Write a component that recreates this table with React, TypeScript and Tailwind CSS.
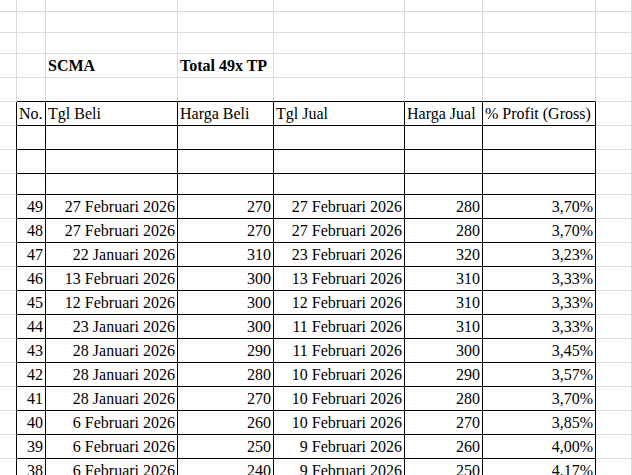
import React from 'react';

// column widths include the 1px right border of each cell
const colW = ['w-[17px]', 'w-[29px]', 'w-[132px]', 'w-[96px]', 'w-[131px]', 'w-[78px]', 'w-[113px]', 'flex-1'];

type Cell = { text?: string; align?: 'left' | 'right'; bold?: boolean };
type Row = { h: string; cells: Cell[]; table: boolean };

const TABLE_FIRST = 1;
const TABLE_LAST = 6;

const trades: [string, string, string, string, string, string][] = [
  ['49', '27 Februari 2026', '270', '27 Februari 2026', '280', '3,70%'],
  ['48', '27 Februari 2026', '270', '27 Februari 2026', '280', '3,70%'],
  ['47', '22 Januari 2026', '310', '23 Februari 2026', '320', '3,23%'],
  ['46', '13 Februari 2026', '300', '13 Februari 2026', '310', '3,33%'],
  ['45', '12 Februari 2026', '300', '12 Februari 2026', '310', '3,33%'],
  ['44', '23 Januari 2026', '300', '11 Februari 2026', '310', '3,33%'],
  ['43', '28 Januari 2026', '290', '11 Februari 2026', '300', '3,45%'],
  ['42', '28 Januari 2026', '280', '10 Februari 2026', '290', '3,57%'],
  ['41', '28 Januari 2026', '270', '10 Februari 2026', '280', '3,70%'],
  ['40', '6 Februari 2026', '260', '10 Februari 2026', '270', '3,85%'],
  ['39', '6 Februari 2026', '250', '9 Februari 2026', '260', '4,00%'],
  ['38', '6 Februari 2026', '240', '9 Februari 2026', '250', '4,17%'],
];

const empty = (): Cell[] => Array.from({ length: 8 }, () => ({}));

const rows: Row[] = [
  { h: 'h-[12px]', cells: empty(), table: false },
  { h: 'h-[21px]', cells: empty(), table: false },
  { h: 'h-[21px]', cells: empty(), table: false },
  {
    h: 'h-[24px]',
    table: false,
    cells: [{}, {}, { text: 'SCMA', bold: true }, { text: 'Total 49x TP', bold: true }, {}, {}, {}, {}],
  },
  { h: 'h-[24px]', cells: empty(), table: false },
  {
    h: 'h-[24px]',
    table: true,
    cells: [
      {},
      { text: 'No.' },
      { text: 'Tgl Beli' },
      { text: 'Harga Beli' },
      { text: 'Tgl Jual' },
      { text: 'Harga Jual' },
      { text: '% Profit (Gross)' },
      {},
    ],
  },
  { h: 'h-[24px]', cells: empty(), table: true },
  { h: 'h-[24px]', cells: empty(), table: true },
  { h: 'h-[21px]', cells: empty(), table: true },
  ...trades.map((t) => ({
    h: 'h-[24px]',
    table: true,
    cells: [{}, ...t.map((v) => ({ text: v, align: 'right' as const })), {}],
  })),
];

const inTable = (r: number, c: number) =>
  r >= 0 && r < rows.length && rows[r].table && c >= TABLE_FIRST && c <= TABLE_LAST;

const App: React.FC = () => {
  return (
    <div className="w-[632px] h-[475px] overflow-hidden bg-white text-black text-[16px] leading-[18px] font-['Liberation_Serif','Times_New_Roman',serif]">
      {rows.map((row, r) => (
        <div key={r} className={`flex ${row.h}`}>
          {row.cells.map((cell, c) => {
            const rightBlack = inTable(r, c) || inTable(r, c + 1);
            const bottomBlack = inTable(r, c) || inTable(r + 1, c);
            return (
              <div
                key={c}
                className={[
                  colW[c],
                  'shrink-0 flex items-end pb-[2px] whitespace-nowrap overflow-visible border-r border-b',
                  rightBlack ? 'border-r-black' : 'border-r-[#dadada]',
                  bottomBlack ? 'border-b-black' : 'border-b-[#dadada]',
                  cell.align === 'right' ? 'justify-end pr-[2px]' : 'justify-start pl-[2px]',
                  cell.bold ? 'font-bold' : '',
                ].join(' ')}
              >
                {cell.text}
              </div>
            );
          })}
        </div>
      ))}
    </div>
  );
};

export default App;
